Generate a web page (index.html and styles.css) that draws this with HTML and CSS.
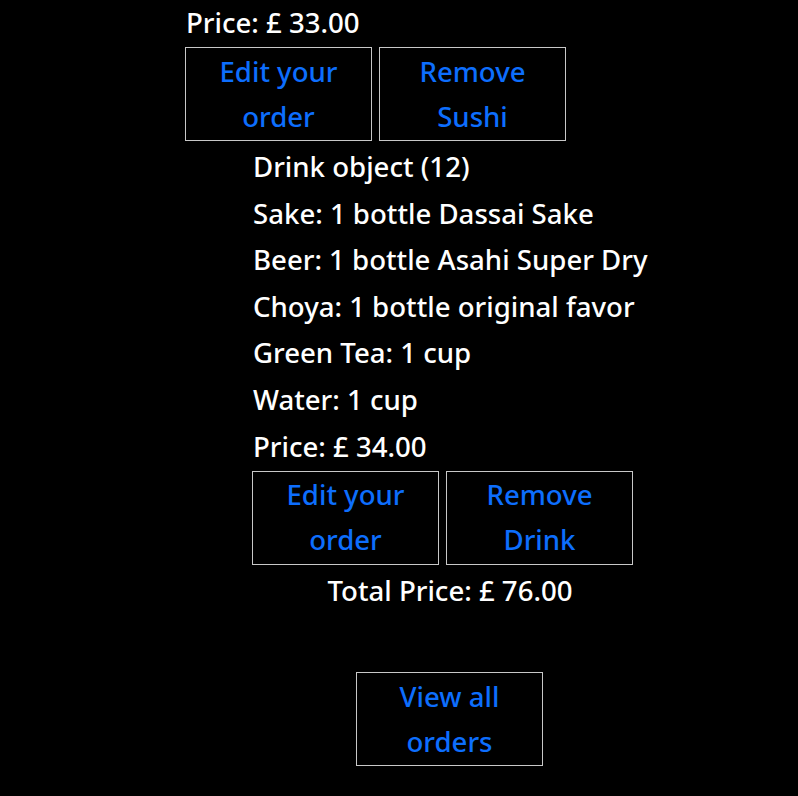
FILE: index.html
```html
<!DOCTYPE html>
<html>
<head>
<meta charset="utf-8">
<link rel="stylesheet" href="styles.css">
</head>
<body>
<div class="page">
  <div class="order">
    <div class="line">Price: £ 33.00</div>
    <div class="actions">
      <button class="btn">Edit your order</button>
      <button class="btn">Remove Sushi</button>
    </div>
    <div class="drink">
      <div class="line">Drink object (12)</div>
      <div class="line">Sake: 1 bottle Dassai Sake</div>
      <div class="line">Beer: 1 bottle Asahi Super Dry</div>
      <div class="line">Choya: 1 bottle original favor</div>
      <div class="line">Green Tea: 1 cup</div>
      <div class="line">Water: 1 cup</div>
      <div class="line">Price: £ 34.00</div>
      <div class="actions">
        <button class="btn">Edit your order</button>
        <button class="btn">Remove Drink</button>
      </div>
    </div>
    <div class="line total">Total Price: £ 76.00</div>
    <div class="footer">
      <button class="btn">View all orders</button>
    </div>
  </div>
</div>
</body>
</html>
```
FILE: styles.css
```css
html, body {
  margin: 0;
  padding: 0;
  background: #000;
}
.page {
  font-family: "Noto Sans", sans-serif;
  font-size: 27.6px;
  font-weight: 500;
  color: #fff;
  height: 796px;
  overflow: hidden;
}
.order {
  margin-left: 185px;
  width: 530px;
  margin-top: -1px;
}
.line {
  height: 46.67px;
  line-height: 46.67px;
  padding-left: 1px;
  white-space: nowrap;
}
.actions {
  display: flex;
  gap: 7px;
  margin: 1.5px 0 1.7px;
}
.btn {
  box-sizing: border-box;
  width: 187px;
  height: 94px;
  padding: 0 24px 1px;
  background: #000;
  border: 1px solid #c8c8c8;
  color: #0d6efd;
  font-family: inherit;
  font-size: 27.6px;
  font-weight: 500;
  line-height: 45px;
  text-align: center;
  cursor: pointer;
}
.drink {
  margin-left: 67px;
}
.total {
  text-align: center;
  padding-left: 0;
}
.footer {
  display: flex;
  justify-content: center;
  margin-top: 59px;
  padding-right: 1px;
}
```
